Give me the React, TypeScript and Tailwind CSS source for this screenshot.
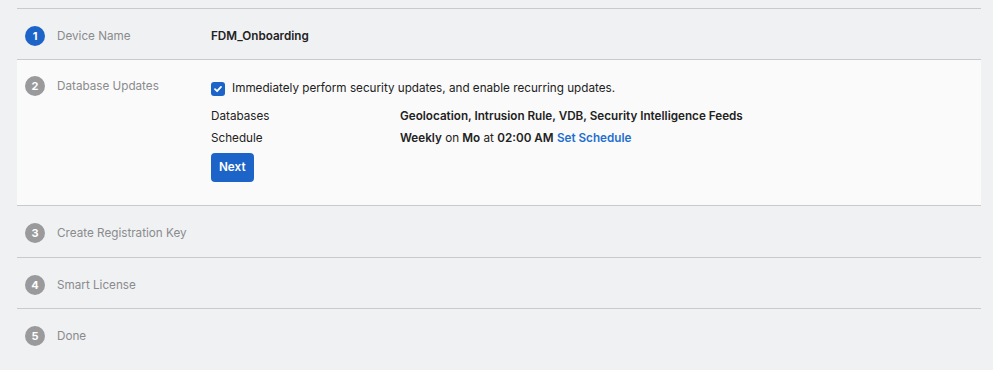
const font = { fontFamily: "Inter, 'Noto Sans', sans-serif" };

function StepBadge({ n, active }: { n: number; active?: boolean }) {
  return (
    <div
      className={`w-5 h-5 rounded-full flex items-center justify-center text-white text-[11px] font-bold shrink-0 ${
        active ? "bg-[#1d64c8]" : "bg-[#9a9a9c]"
      }`}
    >
      {n}
    </div>
  );
}

function StepRow({
  n,
  label,
  active,
  h = "h-[51px]",
  children,
}: {
  n: number;
  label: string;
  active?: boolean;
  h?: string;
  children?: React.ReactNode;
}) {
  return (
    <div className={`flex items-start ${h} border-t border-[#c9cacc] pl-2 pt-[17px]`}>
      <StepBadge n={n} active={active} />
      <span className="ml-3 w-[154px] text-[11.7px] leading-5 text-[#8a8b8d]">{label}</span>
      {children}
    </div>
  );
}

export default function App() {
  return (
    <div className="w-full h-screen bg-[#f0f1f3] pt-2 pl-[17px]" style={font}>
      <div className="w-[964px]">
        <StepRow n={1} label="Device Name" active>
          <span className="text-[11.7px] leading-5 font-semibold text-[#222]">FDM_Onboarding</span>
        </StepRow>

        {/* active step */}
        <div className="flex border-t border-[#c9cacc] bg-[#fafafa] pl-2 pt-4 h-[146px]">
          <StepBadge n={2} />
          <span className="ml-3 w-[154px] text-[11.7px] text-[#8a8b8d] leading-5">Database Updates</span>
          <div className="flex flex-col text-[11.7px] text-[#222] pt-[2px]">
            <label className="flex items-center gap-[7px] h-[22px]">
              <span className="w-[14px] h-[14px] rounded-[3px] bg-[#1d64c8] flex items-center justify-center">
                <svg width="10" height="10" viewBox="0 0 10 10" fill="none">
                  <path d="M2 5.2 L4.1 7.2 L8 2.9" stroke="white" strokeWidth="1.8" strokeLinecap="round" strokeLinejoin="round" />
                </svg>
              </span>
              Immediately perform security updates, and enable recurring updates.
            </label>
            <div className="flex h-[22px] items-center mt-[6px]">
              <span className="w-[189px]">Databases</span>
              <span className="font-semibold">Geolocation, Intrusion Rule, VDB, Security Intelligence Feeds</span>
            </div>
            <div className="flex h-[22px] items-center">
              <span className="w-[189px]">Schedule</span>
              <span>
                <b className="font-semibold">Weekly</b> on <b className="font-semibold">Mo</b> at{" "}
                <b className="font-semibold">02:00 AM</b>{" "}
                <span className="text-[#1f6fce] font-semibold">Set Schedule</span>
              </span>
            </div>
            <div className="mt-[3px]">
              <button className="h-[29px] px-2 rounded-[4px] bg-[#1d64c8] text-white text-[11.7px] font-semibold">
                Next
              </button>
            </div>
          </div>
        </div>

        <StepRow n={3} label="Create Registration Key" h="h-[52px]" />
        <StepRow n={4} label="Smart License" />
        <StepRow n={5} label="Done" />
      </div>
    </div>
  );
}
